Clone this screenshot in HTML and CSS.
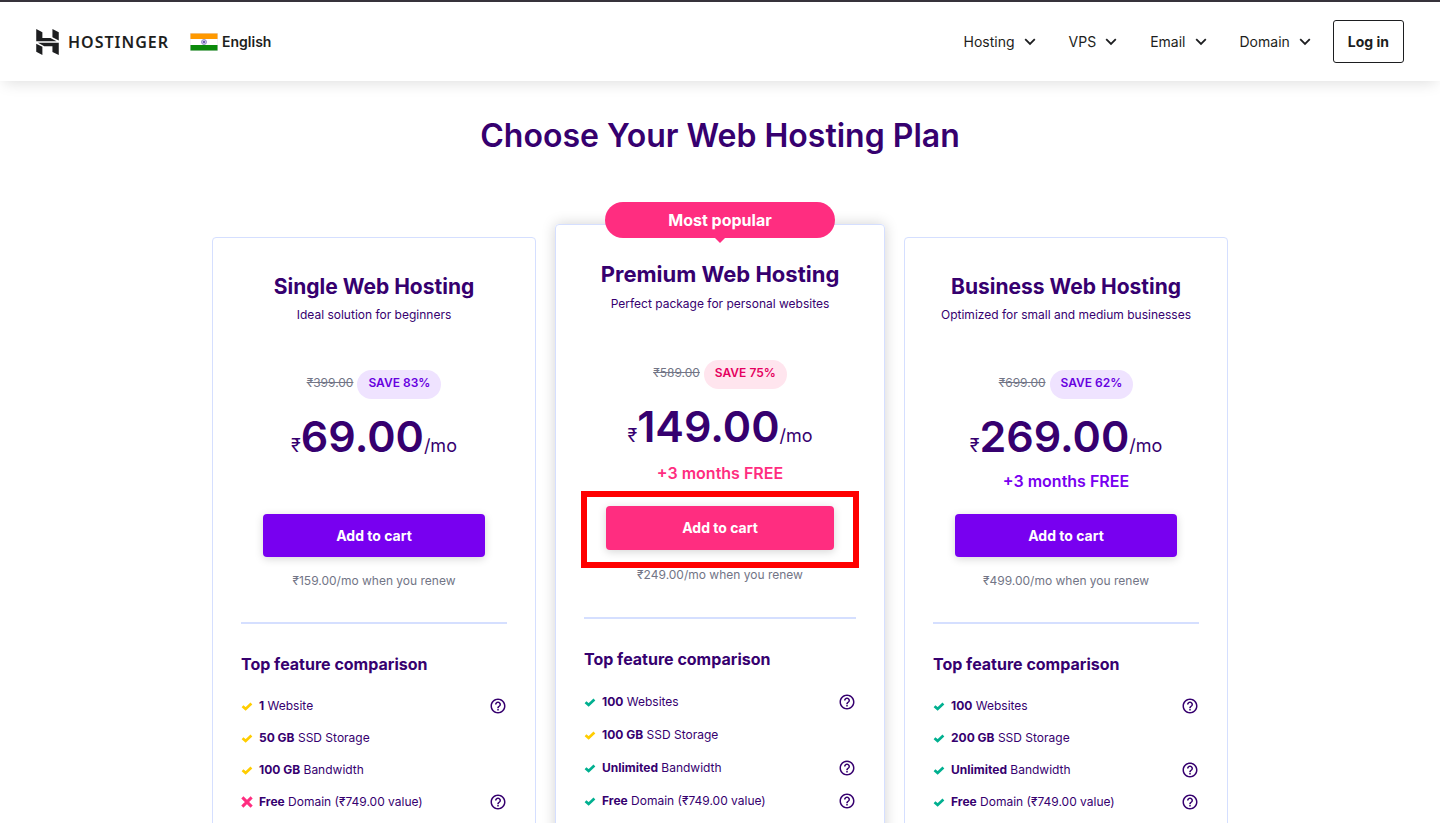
FILE: index.html
```html
<!DOCTYPE html>
<html lang="en">
<head>
<meta charset="utf-8">
<meta name="viewport" content="width=device-width, initial-scale=1">
<title>Choose Your Web Hosting Plan</title>
<link rel="stylesheet" href="styles.css">
</head>
<body>
<svg class="sprite" aria-hidden="true">
  <symbol id="check" viewBox="0 0 12 12"><path d="M1.500 6.300 4.600 8.900 10.400 3.500" fill="none" stroke="currentColor" stroke-width="2.700"/></symbol>
  <symbol id="cross" viewBox="0 0 12 12"><path d="M2.400 2.400 9.600 9.600M9.600 2.400 2.400 9.600" fill="none" stroke="currentColor" stroke-width="3" stroke-linecap="square"/></symbol>
  <symbol id="help" viewBox="0 0 24 24"><path d="M11 18h2v-2h-2v2zm1-16C6.480 2 2 6.480 2 12s4.480 10 10 10 10-4.480 10-10S17.520 2 12 2zm0 18c-4.410 0-8-3.590-8-8s3.590-8 8-8 8 3.590 8 8-3.590 8-8 8zm0-14c-2.210 0-4 1.790-4 4h2c0-1.100.9-2 2-2s2 .9 2 2c0 2-3 1.750-3 5h2c0-2.250 3-2.500 3-5 0-2.210-1.790-4-4-4z"/></symbol>
  <symbol id="chevron" viewBox="0 0 12 8"><path d="M1.200 1.200 6 6 10.800 1.200" fill="none" stroke="currentColor" stroke-width="1.800"/></symbol>
</svg>

<header class="header">
  <a class="logo" href="#">
    <svg class="logo-mark" viewBox="0 0 26 30" aria-hidden="true"><path d="M0 14V0l7.100 3.800v6.600h9.300l7.100 3.600zM18.700 9.400V0L26 3.700v9.600zM18.700 26.400v-6.600H9.300L2 16h24v14zM0 26.200v-9.300l7.100 3.700V30z"/></svg>
    <span>HOSTINGER</span>
  </a>
  <button class="language" type="button">
    <svg class="flag" viewBox="0 0 28 18" aria-hidden="true">
      <rect width="28" height="18" fill="#e8e4f0"/>
      <rect x="0.500" y="0.500" width="27" height="5.500" fill="#ff9900"/>
      <rect x="0.500" y="6" width="27" height="6" fill="#fff"/>
      <rect x="0.500" y="12" width="27" height="5.500" fill="#0b8a0b"/>
      <circle cx="14" cy="9" r="2.500" fill="#c9c4e6" stroke="#8480c0" stroke-width="0.800"/>
      <circle cx="14" cy="9" r="1" fill="#4a3f9c"/>
    </svg>
    <span>English</span>
  </button>
  <nav class="nav" aria-label="Main">
    <button class="nav-item" type="button">Hosting <svg class="chevron"><use href="#chevron"/></svg></button>
    <button class="nav-item" type="button">VPS <svg class="chevron"><use href="#chevron"/></svg></button>
    <button class="nav-item" type="button">Email <svg class="chevron"><use href="#chevron"/></svg></button>
    <button class="nav-item" type="button">Domain <svg class="chevron"><use href="#chevron"/></svg></button>
  </nav>
  <a class="login" href="#">Log in</a>
</header>

<main class="main">
  <h1 class="title">Choose Your Web Hosting Plan</h1>
  <div class="plans">
    <section class="plan">
      <h2 class="plan-name">Single Web Hosting</h2>
      <p class="plan-note">Ideal solution for beginners</p>
      <div class="discount"><s class="old-price">₹399.00</s><span class="save">SAVE 83%</span></div>
      <p class="price"><span class="unit">₹</span><strong>69.00</strong><span class="unit">/mo</span></p>
      <p class="bonus"></p>
      <div class="cta"><button class="cart" type="button">Add to cart</button></div>
      <p class="renew">₹159.00/mo when you renew</p>
      <h3 class="features-title">Top feature comparison</h3>
      <ul class="features">
        <li><svg class="mark partial"><use href="#check"/></svg><span><b>1</b> Website</span><button class="help" type="button" aria-label="About websites"><svg><use href="#help"/></svg></button></li>
        <li><svg class="mark partial"><use href="#check"/></svg><span><b>50 GB</b> SSD Storage</span></li>
        <li><svg class="mark partial"><use href="#check"/></svg><span><b>100 GB</b> Bandwidth</span></li>
        <li><svg class="mark missing"><use href="#cross"/></svg><span><b>Free</b> Domain (₹749.00 value)</span><button class="help" type="button" aria-label="About free domain"><svg><use href="#help"/></svg></button></li>
      </ul>
    </section>

    <section class="plan featured">
      <div class="badge">Most popular</div>
      <h2 class="plan-name">Premium Web Hosting</h2>
      <p class="plan-note">Perfect package for personal websites</p>
      <div class="discount"><s class="old-price">₹589.00</s><span class="save">SAVE 75%</span></div>
      <p class="price"><span class="unit">₹</span><strong>149.00</strong><span class="unit">/mo</span></p>
      <p class="bonus">+3 months FREE</p>
      <div class="cta highlight"><button class="cart" type="button">Add to cart</button></div>
      <p class="renew">₹249.00/mo when you renew</p>
      <h3 class="features-title">Top feature comparison</h3>
      <ul class="features">
        <li><svg class="mark"><use href="#check"/></svg><span><b>100</b> Websites</span><button class="help" type="button" aria-label="About websites"><svg><use href="#help"/></svg></button></li>
        <li><svg class="mark partial"><use href="#check"/></svg><span><b>100 GB</b> SSD Storage</span></li>
        <li><svg class="mark"><use href="#check"/></svg><span><b>Unlimited</b> Bandwidth</span><button class="help" type="button" aria-label="About bandwidth"><svg><use href="#help"/></svg></button></li>
        <li><svg class="mark"><use href="#check"/></svg><span><b>Free</b> Domain (₹749.00 value)</span><button class="help" type="button" aria-label="About free domain"><svg><use href="#help"/></svg></button></li>
      </ul>
    </section>

    <section class="plan">
      <h2 class="plan-name">Business Web Hosting</h2>
      <p class="plan-note">Optimized for small and medium businesses</p>
      <div class="discount"><s class="old-price">₹699.00</s><span class="save">SAVE 62%</span></div>
      <p class="price"><span class="unit">₹</span><strong>269.00</strong><span class="unit">/mo</span></p>
      <p class="bonus">+3 months FREE</p>
      <div class="cta"><button class="cart" type="button">Add to cart</button></div>
      <p class="renew">₹499.00/mo when you renew</p>
      <h3 class="features-title">Top feature comparison</h3>
      <ul class="features">
        <li><svg class="mark"><use href="#check"/></svg><span><b>100</b> Websites</span><button class="help" type="button" aria-label="About websites"><svg><use href="#help"/></svg></button></li>
        <li><svg class="mark"><use href="#check"/></svg><span><b>200 GB</b> SSD Storage</span></li>
        <li><svg class="mark"><use href="#check"/></svg><span><b>Unlimited</b> Bandwidth</span><button class="help" type="button" aria-label="About bandwidth"><svg><use href="#help"/></svg></button></li>
        <li><svg class="mark"><use href="#check"/></svg><span><b>Free</b> Domain (₹749.00 value)</span><button class="help" type="button" aria-label="About free domain"><svg><use href="#help"/></svg></button></li>
      </ul>
    </section>
  </div>
</main>
</body>
</html>
```
FILE: styles.css
```css
* {
  box-sizing: border-box;
}

html {
  overflow: hidden;
}

body,
h1,
h2,
h3,
p,
ul {
  margin: 0;
  padding: 0;
}

body {
  font-family: Inter, "Noto Sans", sans-serif;
  font-size: 12px;
  color: #36006f;
  background: #fff;
  border-top: 2px solid #36333b;
}

button {
  padding: 0;
  border: 0;
  background: none;
  color: inherit;
  font: inherit;
  cursor: pointer;
}

a {
  color: inherit;
  text-decoration: none;
}

.sprite {
  display: none;
}

/* Header */

.header {
  display: flex;
  align-items: center;
  padding: 18px 36px;
  color: #1d1e20;
  font-size: 14px;
  background: #fff;
  box-shadow: 0 6px 14px -4px rgba(0, 0, 0, 0.13);
}

.logo {
  display: flex;
  align-items: center;
  gap: 9px;
  font-family: "Noto Sans", sans-serif;
  font-size: 16px;
  font-weight: 600;
  letter-spacing: 1px;
}

.logo-mark {
  width: 23px;
  height: 26px;
  fill: currentColor;
}

.language {
  display: flex;
  align-items: center;
  gap: 4px;
  margin-left: 21px;
  font-weight: 600;
}

.flag {
  width: 28px;
  height: 18px;
}

.nav {
  display: flex;
  gap: 33px;
  margin-left: auto;
}

.nav-item {
  display: flex;
  align-items: center;
  gap: 9px;
}

.chevron {
  width: 12px;
  height: 8px;
}

.login {
  margin-left: 22px;
  padding: 0 14px;
  border: 1px solid #1d1e20;
  border-radius: 3px;
  font-weight: 700;
  line-height: 41px;
}

/* Plans */

.main {
  max-width: 1016px;
  margin: 0 auto;
}

.title {
  margin-top: 34px;
  font-size: 32px;
  font-weight: 600;
  line-height: 42px;
  text-align: center;
}

.plans {
  display: grid;
  grid-template-columns: 324fr 330fr 324fr;
  gap: 19px;
  margin-top: 67px;
}

.plan {
  margin-top: 13px;
  padding: 36px 28px 40px;
  border: 1px solid #d5dfff;
  border-radius: 4px;
  text-align: center;
}

.plan-name {
  font-size: 21px;
  font-weight: 700;
  line-height: 26px;
}

.plan-note {
  line-height: 30px;
}

.discount {
  display: flex;
  justify-content: center;
  gap: 4px;
  margin-top: 40px;
  line-height: 26px;
}

.old-price {
  color: #727586;
}

.save {
  padding: 0 11px 3px;
  border-radius: 15px;
  color: #6700e0;
  font-weight: 600;
  background: #efe3ff;
}

.price {
  margin-top: 12px;
  font-size: 43px;
  line-height: 50px;
}

.price strong {
  font-weight: 600;
}

.unit {
  font-size: 18px;
  line-height: 1;
}

.bonus {
  min-height: 24px;
  margin-top: 8px;
  color: #7800f0;
  font-size: 16px;
  font-weight: 600;
  line-height: 24px;
}

.cta {
  margin: 21px 22px 0;
}

.cart {
  display: block;
  width: 100%;
  border-radius: 4px;
  color: #fff;
  font-size: 14px;
  font-weight: 700;
  line-height: 43px;
  background: #7800f0;
  box-shadow: 0 2px 8px rgba(0, 0, 0, 0.16);
}

.renew {
  margin-top: 14px;
  padding-bottom: 31px;
  border-bottom: 2px solid #d5dfff;
  color: #727586;
  line-height: 20px;
}

.features-title {
  margin: 28px 0 14px;
  font-size: 16px;
  font-weight: 700;
  line-height: 24px;
  text-align: left;
}

.features {
  list-style: none;
}

.features li {
  display: flex;
  align-items: center;
  gap: 6px;
  line-height: 32px;
}

.features b {
  font-weight: 700;
}

.mark {
  width: 12px;
  height: 12px;
  color: #00b090;
  fill: currentColor;
}

.partial {
  color: #ffcd00;
}

.missing {
  color: #ff2d80;
}

.help {
  margin-left: auto;
  line-height: 0;
}

.help svg {
  width: 18px;
  height: 18px;
  fill: currentColor;
}

/* Featured plan */

.featured {
  position: relative;
  margin-top: 0;
  box-shadow: 0 0 14px rgba(0, 0, 0, 0.18);
}

.badge {
  position: absolute;
  top: -23px;
  left: 15%;
  width: 70%;
  border-radius: 18px;
  color: #fff;
  font-size: 16px;
  font-weight: 700;
  line-height: 36px;
  background: #ff2d80;
}

.badge::after {
  content: "";
  position: absolute;
  top: 100%;
  left: 50%;
  margin-left: -5px;
  border: 5px solid transparent;
  border-top-color: #ff2d80;
  border-bottom-width: 0;
}

.featured .plan-name {
  font-size: 22px;
}

.featured .plan-note {
  margin-top: 2px;
}

.featured .discount {
  margin-top: 41px;
}

.featured .save {
  color: #e5005f;
  background: #ffe5ee;
}

.featured .bonus {
  margin-top: 10px;
  color: #ff2d80;
}

.featured .cart {
  line-height: 44px;
  background: #ff2d80;
}

.featured .renew {
  margin-top: 15px;
  padding-bottom: 32px;
}

.featured .features li {
  line-height: 33px;
}

.highlight {
  position: relative;
}

.highlight::after {
  content: "";
  position: absolute;
  inset: -15px -25px -18px;
  border: 6px solid #f00;
  pointer-events: none;
}
```
